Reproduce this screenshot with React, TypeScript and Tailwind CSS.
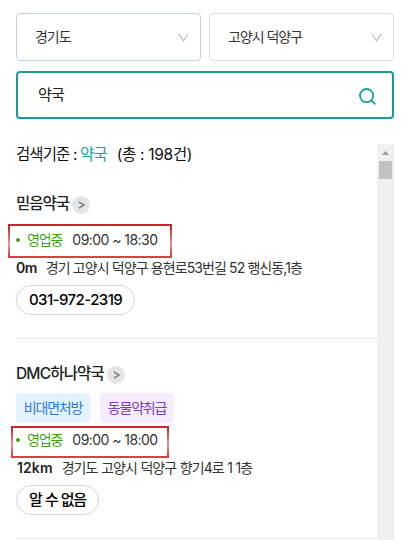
import clsx from 'clsx';

interface Tag {
  label: string;
  className: string;
}

interface Pharmacy {
  name: string;
  nameClass: string;
  tags: Tag[];
  hours: string;
  distance: string;
  distanceClass: string;
  address: string;
  addressClass: string;
  contact: string;
  contactClass: string;
  markClass: string;
}

const REGIONS = [
  { label: '경기도', className: 'border-[#c3cfdf]' },
  { label: '고양시 덕양구', className: 'border-[#dcdcdc]' },
];

const PHARMACIES: Pharmacy[] = [
  {
    name: '믿음약국',
    nameClass: 'tracking-[-1px]',
    tags: [],
    hours: '09:00 ~ 18:30',
    distance: '0m',
    distanceClass: 'tracking-[-0.5px]',
    address: '경기 고양시 덕양구 용현로53번길 52 행신동,1층',
    addressClass: 'ml-[9px] tracking-[-0.9px]',
    contact: '031-972-2319',
    contactClass: 'tracking-[-0.57px]',
    markClass: '-left-2 -top-1.5 h-[34px] w-[164px]',
  },
  {
    name: 'DMC하나약국',
    nameClass: 'tracking-[-0.82px]',
    tags: [
      { label: '비대면처방', className: 'bg-[#e4f2ff] text-[#2b7de0]' },
      { label: '동물약취급', className: 'bg-[#f5ecff] text-[#7a3cc4]' },
    ],
    hours: '09:00 ~ 18:00',
    distance: '12km',
    distanceClass: 'ml-px tracking-[0.1px]',
    address: '경기도 고양시 덕양구 향기4로 1 1층',
    addressClass: 'ml-[9px] tracking-[-0.9px] [word-spacing:0.4px]',
    contact: '알 수 없음',
    contactClass: 'tracking-[-1.4px] [word-spacing:0.9px]',
    markClass: '-left-[5px] -top-1 h-8 w-[158px]',
  },
];

function RegionSelect({ label, className }: { label: string; className: string }) {
  return (
    <button className={clsx('flex h-12 flex-1 items-center justify-between rounded border pl-[18px] pr-[11px]', className)}>
      <span className="text-sm tracking-[-1.05px] text-[#333]">{label}</span>
      <svg width="11" height="9" viewBox="0 0 11 9" fill="none" stroke="#b5b5b5" strokeWidth="1.1">
        <path d="M0.7 0.8 5.5 7.8 10.3 0.8" />
      </svg>
    </button>
  );
}

function PharmacyItem({ item }: { item: Pharmacy }) {
  return (
    <li className="border-b border-[#ebebeb] pb-[23px] pt-[25px]">
      <div className="flex h-5 items-center gap-[3px]">
        <h3 className={clsx('whitespace-nowrap text-[15.5px] font-medium text-[#222]', item.nameClass)}>{item.name}</h3>
        <span className="mt-0.5 flex size-[18px] items-center justify-center rounded-full bg-[#e5e5e5]">
          <svg width="7" height="8" viewBox="0 0 7 8" fill="none" stroke="#777" strokeWidth="1.4">
            <path d="M0.8 0.8 6 4 0.8 7.2" />
          </svg>
        </span>
      </div>

      {item.tags.length > 0 ? (
        <div className="mb-[7px] mt-[9px] flex gap-2.5">
          {item.tags.map((tag) => (
            <span
              key={tag.label}
              className={clsx('flex h-[30px] w-[74px] items-center justify-center whitespace-nowrap rounded text-sm tracking-[-1.2px]', tag.className)}
            >
              {tag.label}
            </span>
          ))}
        </div>
      ) : (
        <div className="h-4" />
      )}

      <div className="relative flex h-5 items-center text-sm">
        <span className="size-1 rounded-full bg-[#3aa30f]" />
        <span className="ml-[7px] tracking-[-1.1px] text-[#3aa30f]">영업중</span>
        <span className="ml-2.5 whitespace-nowrap tracking-[-0.55px] text-[#333]">{item.hours}</span>
        <div
          className={clsx(
            'absolute border-2 [border-image:linear-gradient(180deg,#c3292d_8%,#e9979a_58%,#d64347_92%)_2]',
            item.markClass,
          )}
        />
      </div>

      <div className="mt-2 flex h-5 items-center whitespace-nowrap text-sm text-[#333]">
        <strong className={clsx('font-semibold text-[#222]', item.distanceClass)}>{item.distance}</strong>
        <span className={item.addressClass}>{item.address}</span>
      </div>

      <button
        className={clsx(
          'mt-[7px] flex h-[30px] items-center whitespace-nowrap rounded-full border border-[#d5d5d5] px-3 text-[15px] font-medium text-black',
          item.contactClass,
        )}
      >
        {item.contact}
      </button>
    </li>
  );
}

export default function App() {
  return (
    <div className="flex h-[540px] w-[402px] flex-col overflow-hidden bg-white pl-4 pr-2 pt-[13px] font-['Inter','Noto_Sans_CJK_KR',sans-serif]">
      {/* 지역 선택 */}
      <div className="flex gap-2">
        {REGIONS.map((region) => (
          <RegionSelect key={region.label} {...region} />
        ))}
      </div>

      {/* 검색창 */}
      <div className="mt-2.5 flex h-12 shrink-0 items-center justify-between rounded border-2 border-[#1a9a9c] pl-5 pr-4">
        <span className="text-[15px] tracking-[-0.8px] text-[#222]">약국</span>
        <svg className="mt-0.5" width="17" height="17" viewBox="0 0 17 17" fill="none" stroke="#1a9fa3" strokeWidth="1.8">
          <circle cx="7.6" cy="7.6" r="6.6" />
          <path d="m12.3 12.3 4 4" />
        </svg>
      </div>

      {/* 검색 결과 */}
      <div className="mt-[25px] flex min-h-0 flex-1">
        <div className="min-w-0 flex-1">
          <p className="mb-[3px] flex h-[22px] items-center whitespace-pre text-[15.5px] tracking-[-0.9px] text-[#111]">
            검색기준 : <span className="text-[#1a9fa3]">약국</span>
            <span className="ml-2.5 tracking-[-0.3px]">(총 : 198건)</span>
          </p>
          <ul>
            {PHARMACIES.map((item) => (
              <PharmacyItem key={item.name} item={item} />
            ))}
          </ul>
        </div>
        <div className="flex w-[17px] flex-col items-center bg-[#f0f0f0]">
          <div className="flex h-[17px] items-center">
            <svg width="7" height="4" viewBox="0 0 7 4" fill="#9a9a9a">
              <path d="M0 4 3.5 0 7 4z" />
            </svg>
          </div>
          <div className="h-[18px] w-[13px] bg-[#c1c1c1]" />
        </div>
      </div>
    </div>
  );
}
